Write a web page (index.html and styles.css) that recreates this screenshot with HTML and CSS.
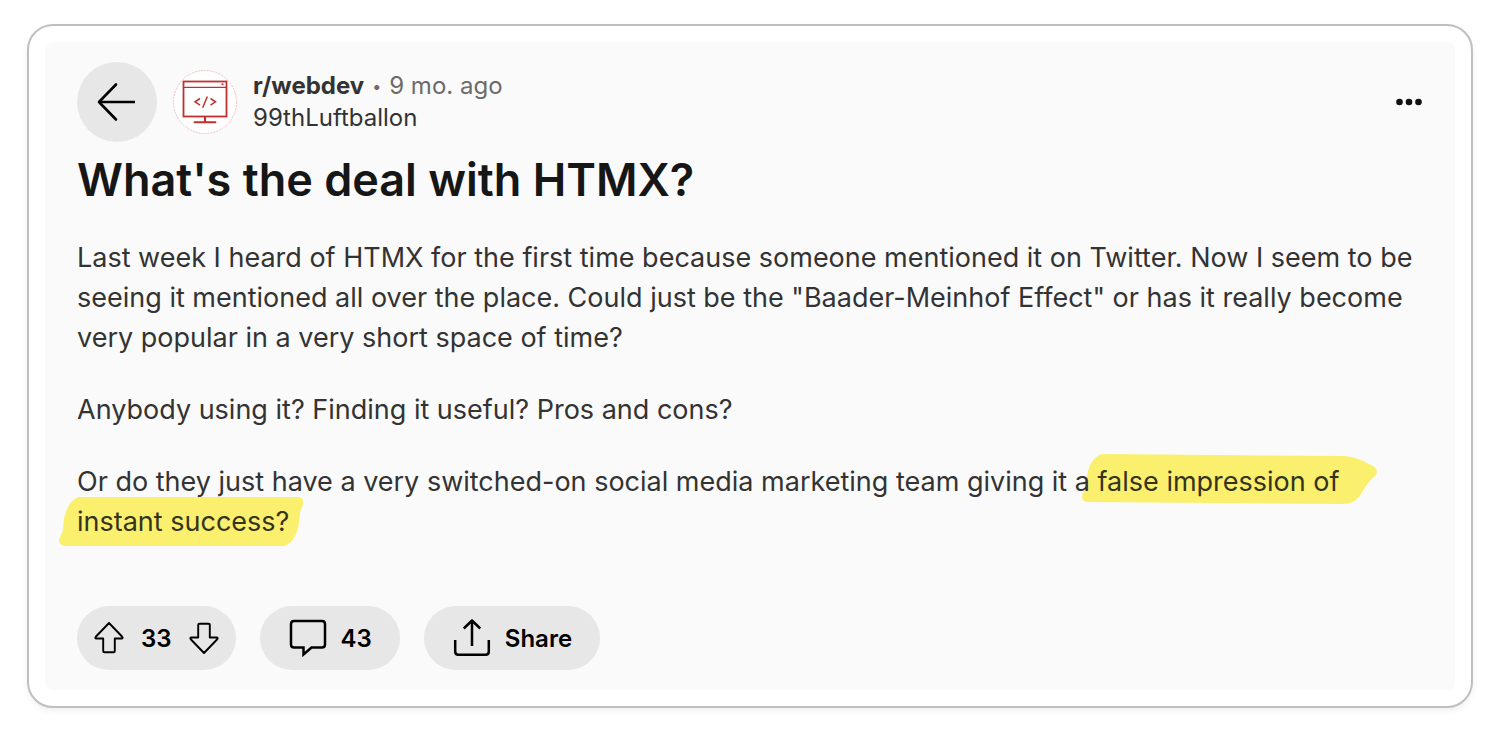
FILE: index.html
```html
<!DOCTYPE html>
<html lang="en">
<head>
<meta charset="utf-8">
<meta name="viewport" content="width=device-width, initial-scale=1">
<title>What's the deal with HTMX?</title>
<link rel="stylesheet" href="styles.css">
</head>
<body>
<main class="card">
  <article class="post">
    <header class="post-header">
      <button class="back" type="button" aria-label="Back">
        <svg width="40" height="40" viewBox="0 0 40 40" fill="none" stroke="currentColor" stroke-width="2.6" stroke-linejoin="round"><path d="M38 20H2"/><path stroke-linecap="round" d="M19 2.500 2 20l17 17.500"/></svg>
      </button>
      <svg class="avatar" width="64" height="64" viewBox="0 0 64 64" fill="none" stroke="#c1302f" aria-hidden="true">
        <circle cx="32" cy="32" r="31.500" fill="#fff" stroke="#e9a9a8" stroke-width=".7" stroke-dasharray="2 1"/>
        <rect x="10.500" y="11.500" width="43" height="35" stroke-width="1.800"/>
        <path d="M10.500 17.300h43" stroke-width="1.300"/>
        <path d="M48.500 14.300h2" stroke-width="1.800"/>
        <path d="M32 47v5" stroke-width="2"/>
        <path d="M21.500 52.300h21" stroke-width="1.900" stroke-linecap="round"/>
        <path d="M27 28.500l-5 3.300 5 3.300M37.500 28.500l5 3.300-5 3.300M34.300 26.500l-4.600 11.300" stroke-width="1.500"/>
      </svg>
      <div class="byline">
        <div class="source"><a class="community" href="#">r/webdev</a><span class="dot">•</span><time class="age">9 mo. ago</time></div>
        <a class="author" href="#">99thLuftballon</a>
      </div>
      <button class="more" type="button" aria-label="More options">
        <svg width="28" height="8" viewBox="0 0 28 8" fill="currentColor"><circle cx="4.500" cy="4" r="3.300"/><circle cx="14" cy="4" r="3.300"/><circle cx="23.500" cy="4" r="3.300"/></svg>
      </button>
    </header>
    <h1 class="title">What's the deal with HTMX?</h1>
    <div class="content">
      <p>Last week I heard of HTMX for the first time because someone mentioned it on Twitter. Now I seem to be seeing it mentioned all over the place. Could just be the "Baader-Meinhof Effect" or has it really become very popular in a very short space of time?</p>
      <p>Anybody using it? Finding it useful? Pros and cons?</p>
      <p>Or do they just have a very switched-on social media marketing team giving it a
        <mark class="marker marker-pointed"><svg viewBox="0 0 296 50" preserveAspectRatio="none" aria-hidden="true"><path d="M20 0 263 2C276 3 284 8 292 12C297 15 297 20 293 23C280 33 281 50 262 50L6 48C0 48-1 43 1 39C5 34 4 28 5 22C7 11 11 3 20 0Z"/></svg>false impression of</mark>
        <mark class="marker marker-slanted"><svg viewBox="0 0 245 49" preserveAspectRatio="none" aria-hidden="true"><path d="M20 0H239C245 0 246 5 244 9C240 17 242 24 239 33C237 41 232 47 226 49H6C0 48-1 44 1 40C6 33 3 26 6 18C9 8 13 2 20 0Z"/></svg>instant success?</mark></p>
    </div>
    <footer class="actions">
      <div class="pill votes">
        <button class="vote" type="button" aria-label="Upvote"><svg width="32" height="32" viewBox="0 0 32 32" fill="none" stroke="currentColor" stroke-width="1.900" stroke-linejoin="round"><path d="M16 1 29 14.500Q30.500 16.500 28.500 16.500H21.800V29Q21.800 30.300 20.500 30.300H11.500Q10.200 30.300 10.200 29V16.500H3.500Q1.500 16.500 3 14.500Z"/></svg></button>
        <span class="count">33</span>
        <button class="vote" type="button" aria-label="Downvote"><svg width="32" height="32" viewBox="0 0 32 32" fill="none" stroke="currentColor" stroke-width="1.900" stroke-linejoin="round"><path d="M16 31 29 17.500Q30.500 15.500 28.500 15.500H21.800V3Q21.800 1.700 20.500 1.700H11.500Q10.200 1.700 10.200 3V15.500H3.500Q1.500 15.500 3 17.500Z"/></svg></button>
      </div>
      <button class="pill action" type="button"><svg width="40" height="40" viewBox="0 0 40 40" fill="none" stroke="currentColor" stroke-width="2.500"><path d="M6 3H34Q37 3 37 6V26.500Q37 29.500 34 29.500H23.500L15.500 36.500V29.500H6Q3 29.500 3 26.500V6Q3 3 6 3Z"/></svg>43</button>
      <button class="pill action" type="button"><svg width="40" height="40" viewBox="0 0 40 40" fill="none" stroke="currentColor" stroke-width="2.500" stroke-linejoin="round"><path d="M20 28V3M11.800 10.500 20 2.500l8.200 8M3.200 22V33.500Q3.200 36.800 6.500 36.800H33.500Q36.800 36.800 36.800 33.500V22"/></svg>Share</button>
    </footer>
  </article>
</main>
</body>
</html>
```
FILE: styles.css
```css
* {
  box-sizing: border-box;
}

body {
  margin: 0;
  padding: 24px 24px 24px 27px;
  background: #fff;
  color: #333;
  font-family: Inter, "Liberation Sans", sans-serif;
}

button {
  margin: 0;
  padding: 0;
  border: 0;
  background: none;
  color: #000;
  font: inherit;
  cursor: pointer;
}

svg {
  display: block;
  flex: none;
}

a {
  color: inherit;
  text-decoration: none;
}

.card {
  padding: 16px;
  border: 2px solid #bfbfbf;
  border-radius: 26px;
  box-shadow: 0 3px 6px rgba(0, 0, 0, 0.06);
}

.post {
  isolation: isolate;
  padding: 20px 32px;
  border-radius: 8px;
  background: #fafafa;
}

.post-header {
  display: flex;
  align-items: center;
  gap: 16px;
}

.back {
  display: grid;
  place-items: center;
  width: 80px;
  height: 80px;
  border-radius: 50%;
  background: #e7e7e7;
}

.byline {
  flex: 1;
  font-size: 24px;
  line-height: 32px;
}

.source {
  display: flex;
  align-items: center;
}

.community {
  font-weight: 700;
}

.dot {
  margin: 0 8px;
  color: #6b6b6b;
  font-size: 16px;
}

.age {
  color: #6b6b6b;
}

.author {
  display: block;
}

.more {
  color: #111;
}

.title {
  margin: 8px 0 28px;
  color: #161616;
  font-size: 45px;
  font-weight: 600;
  line-height: 60px;
}

.content {
  font-size: 27px;
  line-height: 40px;
}

.content p {
  margin: 0 0 32px;
}

.marker {
  position: relative;
  display: inline-block;
  background: none;
  color: #35331c;
  white-space: nowrap;
}

.marker svg {
  position: absolute;
  z-index: -1;
  fill: #fbf06e;
}

.marker-pointed svg {
  top: -8px;
  left: -16px;
  width: calc(100% + 53px);
  height: 50px;
}

.marker-slanted svg {
  top: -5px;
  left: -18px;
  width: calc(100% + 32px);
  height: 49px;
}

.actions {
  display: flex;
  gap: 24px;
  padding-top: 32px;
}

.pill {
  display: flex;
  align-items: center;
  height: 64px;
  border-radius: 32px;
  background: #e7e7e7;
  color: #000;
  font-size: 24px;
  font-weight: 600;
}

.votes {
  gap: 16px;
  padding: 0 16px;
}

.action {
  gap: 13px;
  padding: 0 28px;
}
```
